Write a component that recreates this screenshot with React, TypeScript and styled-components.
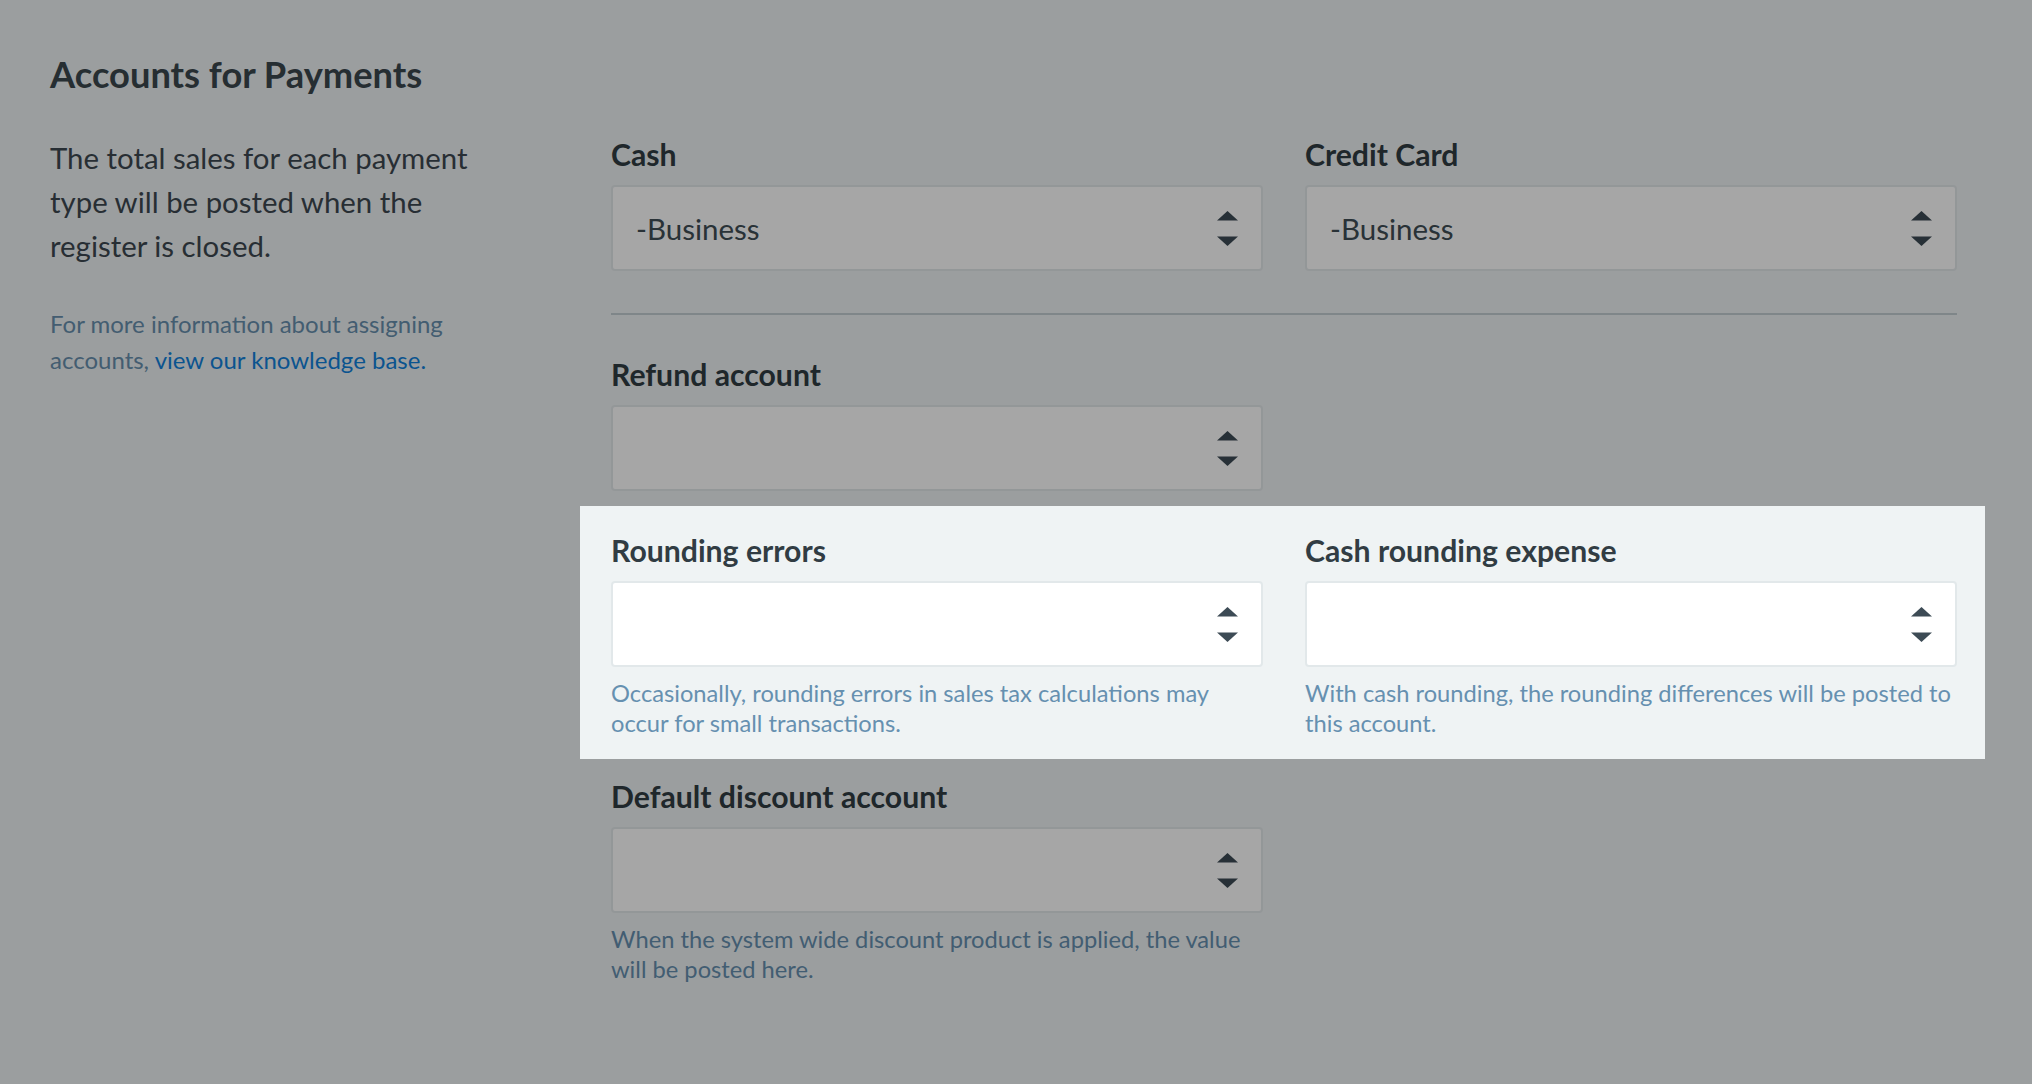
import React from "react";
import styled, { createGlobalStyle } from "styled-components";

const GlobalStyle = createGlobalStyle`
  html, body {
    margin: 0;
    padding: 0;
    background: #eff3f4;
  }
  body {
    font-family: Lato, "Noto Sans", sans-serif;
    -webkit-font-smoothing: antialiased;
  }
  *, *::before, *::after { box-sizing: border-box; }
`;

const Page = styled.div`
  min-height: 100vh;
  padding: 53px 75px 0 50px;
  background: #eff3f4;
`;

const Title = styled.h2`
  margin: 0;
  font-size: 36.3px;
  line-height: 42px;
  font-weight: 700;
  color: #3b474e;
`;

const Layout = styled.div`
  display: grid;
  grid-template-columns: 440px 1fr;
  column-gap: 121px;
  margin-top: 41px;
`;

const Aside = styled.div`
  display: flex;
  flex-direction: column;
`;

const Description = styled.p`
  margin: 0;
  font-size: 29.4px;
  line-height: 44px;
  color: #3d4850;
`;

const Info = styled.p`
  margin: 38px 0 0;
  font-size: 24px;
  line-height: 36px;
  color: #6890ae;
`;

const Link = styled.a`
  color: #1282dc;
  text-decoration: none;
`;

const Form = styled.div`
  display: flex;
  flex-direction: column;
`;

const Row = styled.div<{ $top: number }>`
  display: grid;
  grid-template-columns: 1fr 1fr;
  column-gap: 42px;
  padding-top: ${(p) => p.$top}px;
`;

const Spotlight = styled(Row)`
  position: relative;
  z-index: 2;
  margin: 15px -28px 0 -31px;
  padding: 27px 28px 21px 31px;
  background: #eff3f4;
`;

const Divider = styled.hr`
  height: 2px;
  margin: 42px 0 0;
  border: 0;
  background: #c3ced3;
`;

const Field = styled.div`
  display: flex;
  flex-direction: column;
`;

const Label = styled.label`
  font-size: 30.2px;
  line-height: 34px;
  font-weight: 700;
  color: #313c43;
  margin-bottom: 14px;
`;

const SelectBox = styled.div`
  height: 86px;
  display: flex;
  align-items: center;
  justify-content: space-between;
  padding: 0 23px;
  border: 2px solid #e2e8ea;
  border-radius: 4px;
  background: #ffffff;
  font-size: 29.5px;
  color: #404d55;
`;

const Help = styled.p`
  margin: 11px 0 0;
  font-size: 23.7px;
  line-height: 30px;
  color: #6690b0;
`;

const Overlay = styled.div`
  position: fixed;
  inset: 0;
  z-index: 1;
  background: rgba(0, 0, 0, 0.35);
  pointer-events: none;
`;

const Arrows = () => (
  <svg width="21" height="35" viewBox="0 0 21 35" aria-hidden="true">
    <polygon points="10.5,0 21,9.5 0,9.5" fill="#3d4b55" />
    <polygon points="0,25.5 21,25.5 10.5,35" fill="#3d4b55" />
  </svg>
);

type SelectFieldProps = { label: string; value?: string; help?: string };

const SelectField = ({ label, value = "", help }: SelectFieldProps) => (
  <Field>
    <Label>{label}</Label>
    <SelectBox role="combobox">
      <span>{value}</span>
      <Arrows />
    </SelectBox>
    {help && <Help>{help}</Help>}
  </Field>
);

export default function App() {
  return (
    <>
      <GlobalStyle />
      <Page>
        <Title>Accounts for Payments</Title>
        <Layout>
          <Aside>
            <Description>
              The total sales for each payment type will be posted when the register is closed.
            </Description>
            <Info>
              For more information about assigning accounts, <Link href="#">view our knowledge base.</Link>
            </Info>
          </Aside>
          <Form>
            <Row $top={1}>
              <SelectField label="Cash" value="-Business" />
              <SelectField label="Credit Card" value="-Business" />
            </Row>
            <Divider />
            <Row $top={42}>
              <SelectField label="Refund account" />
            </Row>
            <Spotlight $top={27}>
              <SelectField
                label="Rounding errors"
                help="Occasionally, rounding errors in sales tax calculations may occur for small transactions."
              />
              <SelectField
                label="Cash rounding expense"
                help="With cash rounding, the rounding differences will be posted to this account."
              />
            </Spotlight>
            <Row $top={20}>
              <SelectField
                label="Default discount account"
                help="When the system wide discount product is applied, the value will be posted here."
              />
            </Row>
          </Form>
        </Layout>
      </Page>
      <Overlay />
    </>
  );
}
